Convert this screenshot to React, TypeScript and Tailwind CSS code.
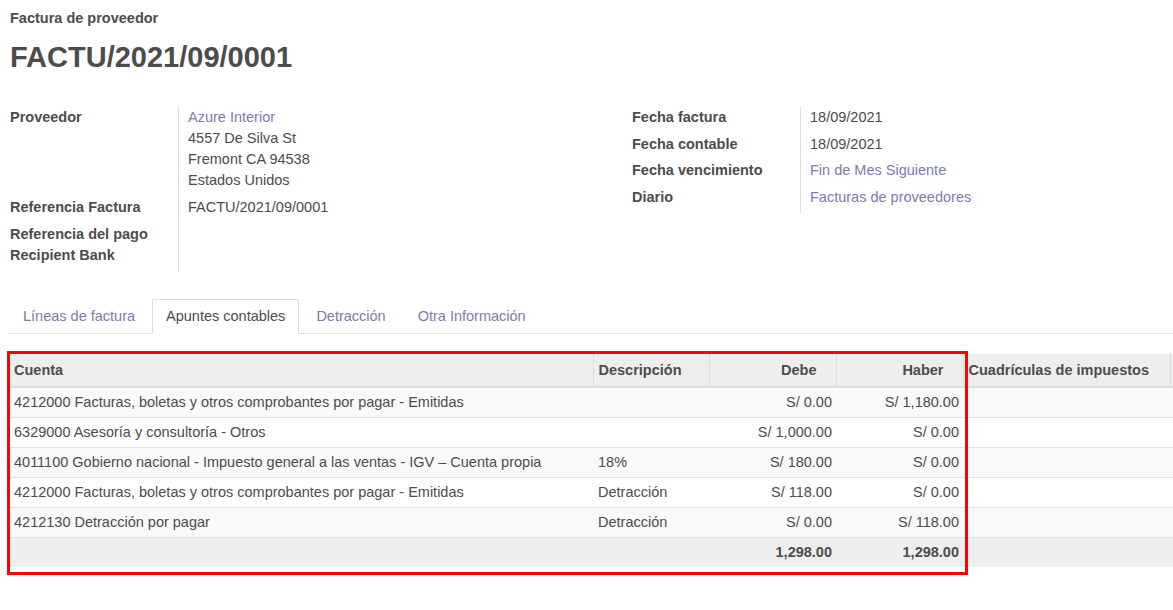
import React from 'react';

interface FieldProps {
  label: React.ReactNode;
  children?: React.ReactNode;
  pad?: string;
}

const Field: React.FC<FieldProps> = ({ label, children, pad = 'pb-[6px]' }) => (
  <div className="flex">
    <div className={`w-[168px] shrink-0 font-bold ${pad}`}>{label}</div>
    <div className={`flex-1 border-l border-[#dcdcdc] pl-[9px] ${pad}`}>{children}</div>
  </div>
);

const link = 'text-[#7c7bad]';

const tabs = ['Líneas de factura', 'Apuntes contables', 'Detracción', 'Otra Información'];

const rows = [
  { cuenta: '4212000 Facturas, boletas y otros comprobantes por pagar - Emitidas', desc: '', debe: 'S/ 0.00', haber: 'S/ 1,180.00' },
  { cuenta: '6329000 Asesoría y consultoría - Otros', desc: '', debe: 'S/ 1,000.00', haber: 'S/ 0.00' },
  { cuenta: '4011100 Gobierno nacional - Impuesto general a las ventas - IGV – Cuenta propia', desc: '18%', debe: 'S/ 180.00', haber: 'S/ 0.00' },
  { cuenta: '4212000 Facturas, boletas y otros comprobantes por pagar - Emitidas', desc: 'Detracción', debe: 'S/ 118.00', haber: 'S/ 0.00' },
  { cuenta: '4212130 Detracción por pagar', desc: 'Detracción', debe: 'S/ 0.00', haber: 'S/ 118.00' },
];

const App: React.FC = () => {
  return (
    <div className="min-h-[610px] bg-white pl-[10px] text-[14.5px] leading-[21px] text-[#4c4c4c] font-['Liberation_Sans']">
      <div className="pt-[8px] font-bold">Factura de proveedor</div>
      <h1 className="mt-[10px] text-[29px] leading-[36px] font-bold">FACTU/2021/09/0001</h1>

      {/* header groups */}
      <div className="mt-[32px] flex">
        <div className="w-[622px] shrink-0">
          <Field label="Proveedor">
            <div className={link}>Azure Interior</div>
            <div>4557 De Silva St</div>
            <div>Fremont CA 94538</div>
            <div>Estados Unidos</div>
          </Field>
          <Field label="Referencia Factura">FACTU/2021/09/0001</Field>
          <Field label={<><div>Referencia del pago</div><div>Recipient Bank</div></>} />
        </div>
        <div className="w-[400px]">
          <Field label="Fecha factura" pad="pb-[5.5px]">18/09/2021</Field>
          <Field label="Fecha contable" pad="pb-[5.5px]">18/09/2021</Field>
          <Field label="Fecha vencimiento" pad="pb-[5.5px]"><span className={link}>Fin de Mes Siguiente</span></Field>
          <Field label="Diario" pad="pb-[5.5px]"><span className={link}>Facturas de proveedores</span></Field>
        </div>
      </div>

      {/* tabs */}
      <ul className="ml-[-2px] mt-[27px] flex border-b border-[#dddddd]">
        {tabs.map((t, i) => (
          <li key={t} className="mr-[2px] mb-[-1px]">
            <span
              className={
                i === 1
                  ? 'block rounded-t-[2px] border border-[#dddddd] border-b-white bg-white px-[13px] py-[6px]'
                  : `block border border-transparent px-[14px] py-[6px] ${link}`
              }
            >
              {t}
            </span>
          </li>
        ))}
      </ul>

      {/* journal items */}
      <div className="relative mt-[20px]">
        <div className="overflow-hidden">
          <table className="w-[1230px] table-fixed">
            <colgroup>
              <col className="w-[583px]" />
              <col className="w-[116px]" />
              <col className="w-[127px]" />
              <col className="w-[127px]" />
              <col className="w-[207px]" />
              <col />
            </colgroup>
            <thead>
              <tr className="h-[33px] bg-[#eeeeee] font-bold border-b-2 border-[#dddddd]">
                <th className="pl-[4px] text-left border-r border-[#dcdcdc]">Cuenta</th>
                <th className="pl-[5px] text-left border-r border-[#dcdcdc]">Descripción</th>
                <th className="pr-[19px] text-right border-r border-[#dcdcdc]">Debe</th>
                <th className="pr-[19px] text-right border-r border-[#dcdcdc]">Haber</th>
                <th className="pl-[5px] text-left border-r border-[#dcdcdc] whitespace-nowrap">Cuadrículas de impuestos</th>
                <th />
              </tr>
            </thead>
            <tbody>
              {rows.map((r, i) => (
                <tr key={i} className={`h-[30px] border-t border-[#dee2e6] ${i % 2 === 0 ? 'bg-[#f9f9f9]' : 'bg-white'}`}>
                  <td className="pl-[4px] whitespace-nowrap">{r.cuenta}</td>
                  <td className="pl-[5px]">{r.desc}</td>
                  <td className="pr-[4px] text-right">{r.debe}</td>
                  <td className="pr-[4px] text-right">{r.haber}</td>
                  <td />
                  <td />
                </tr>
              ))}
              <tr className="h-[30px] border-t border-[#dee2e6] bg-[#eeeeee] font-bold">
                <td />
                <td />
                <td className="pr-[4px] text-right">1,298.00</td>
                <td className="pr-[4px] text-right">1,298.00</td>
                <td />
                <td />
              </tr>
            </tbody>
          </table>
        </div>
        {/* red highlight annotation */}
        <div className="pointer-events-none absolute left-[-3px] top-[-3px] h-[224px] w-[961px] border-[3px] border-[#ff0000]" />
      </div>
    </div>
  );
};

export default App;
